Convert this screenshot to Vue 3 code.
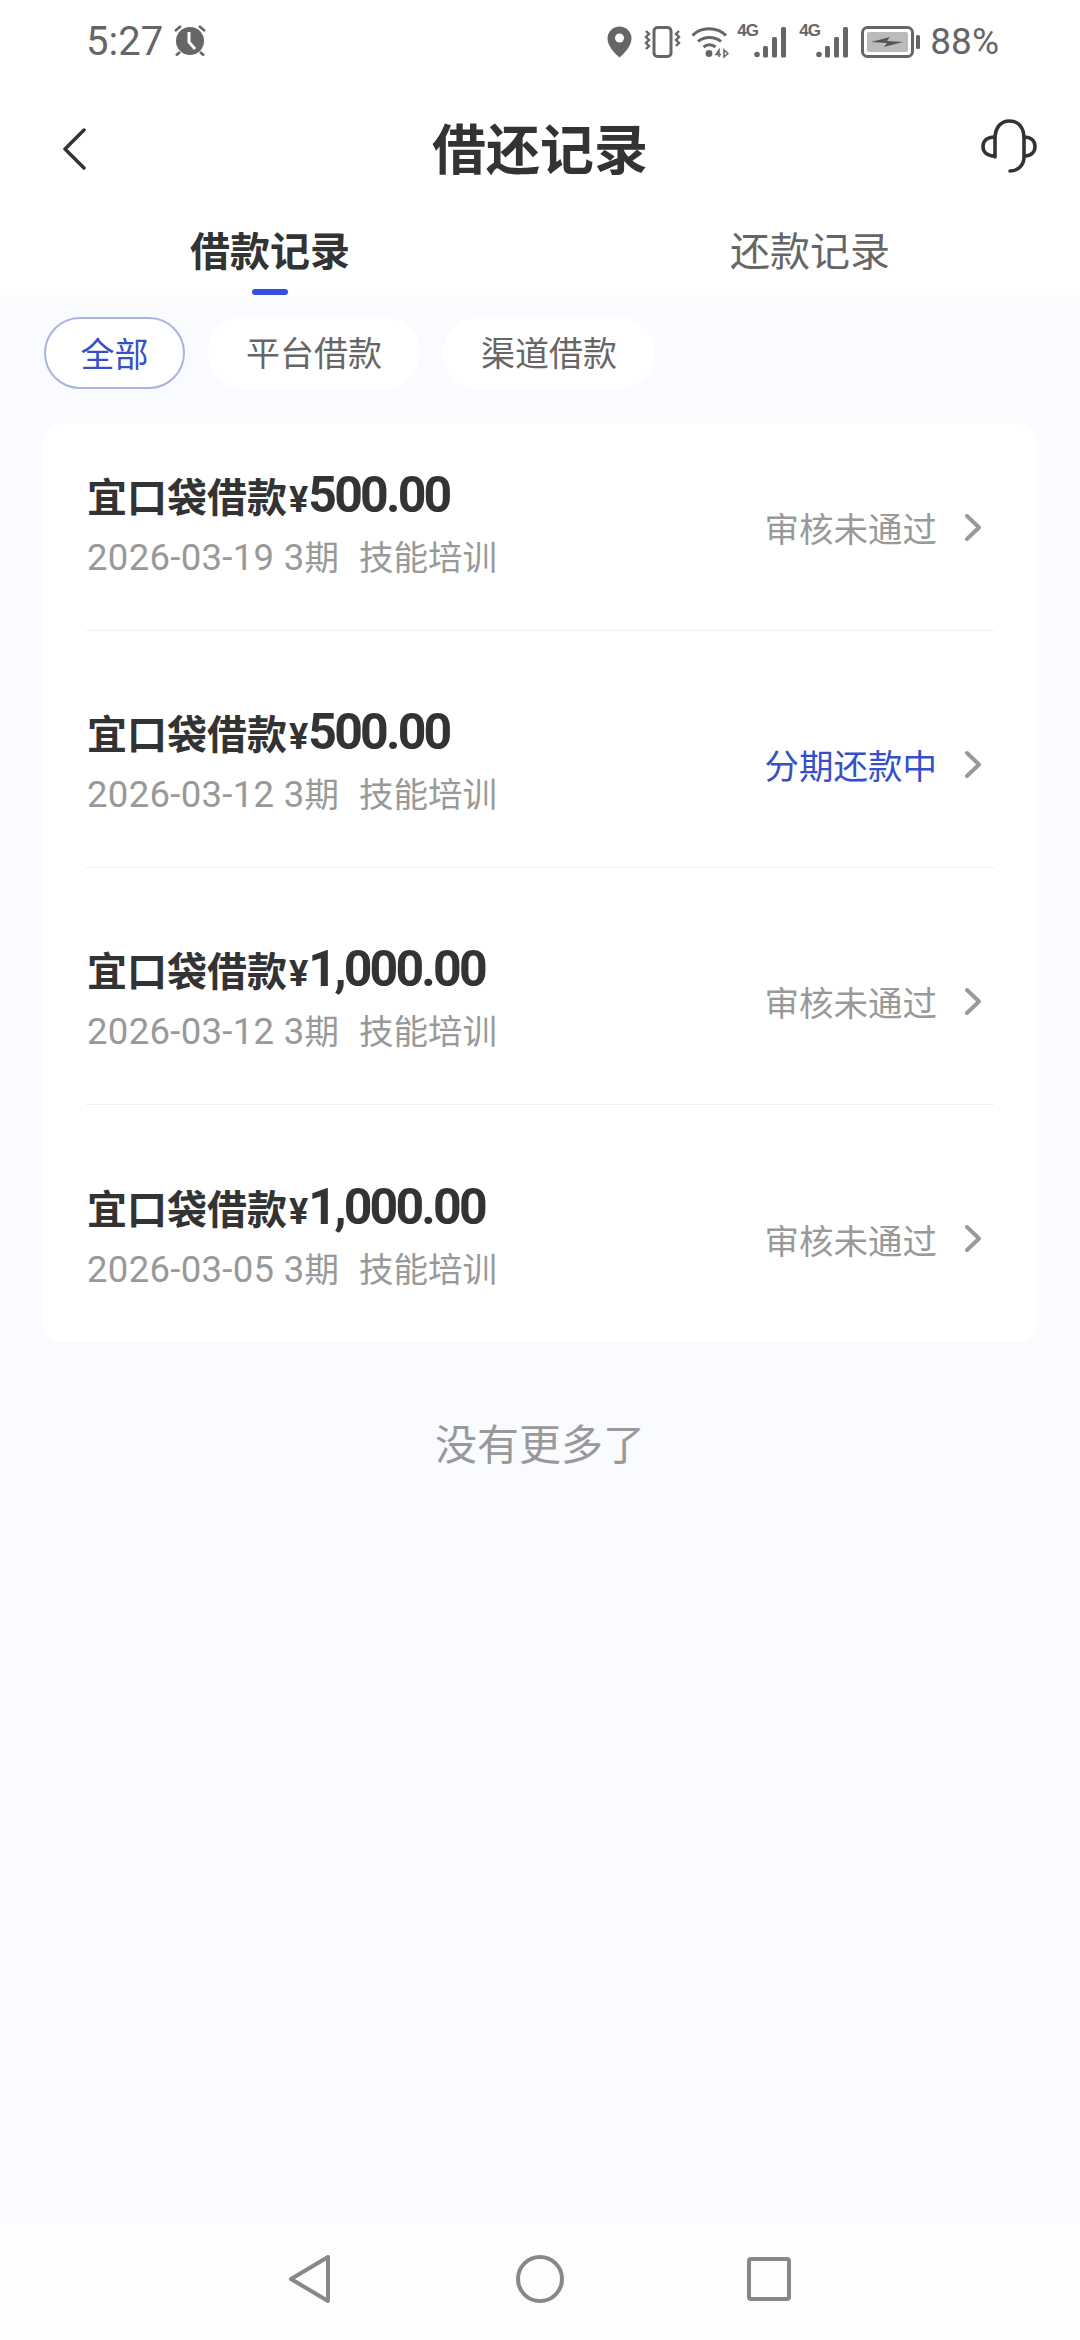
<template>
  <div class="page">
    <div class="top">
      <div class="status-bar">
        <div class="status-left">
          <span class="time">5:27</span>
          <svg class="alarm" width="34" height="32" viewBox="0 0 34 32">
            <circle cx="17" cy="17" r="14" fill="#666" />
            <path d="M16 8v10l6 7" fill="none" stroke="#fff" stroke-width="3" />
            <path d="M2 7l6-5M32 7l-6-5M7 28l-4 3.500M27 28l4 3.500" stroke="#666" stroke-width="2.600" />
          </svg>
        </div>
        <div class="status-right">
          <svg width="25" height="32" viewBox="0 0 25 32">
            <path d="M12.500 0.500C5.800.5.5 5.800.5 12.500c0 8 8 15.500 12 19 4-3.500 12-11 12-19C24.500 5.800 19.200.5 12.500.5z" fill="#666" />
            <circle cx="12.500" cy="12" r="4.500" fill="#fff" />
          </svg>
          <svg class="ml12" width="38" height="32" viewBox="0 0 38 32">
            <rect x="10" y="1.500" width="17" height="29" rx="3.500" fill="none" stroke="#666" stroke-width="3" />
            <path d="M2 5l3 3-3 3 3 3-3 3 3 3-3 3M35 5l-3 3 3 3-3 3 3 3-3 3" fill="none" stroke="#666" stroke-width="2.400" />
          </svg>
          <svg class="ml9" width="38" height="32" viewBox="0 0 38 32">
            <path d="M1.500 9.500C10 .5 26 .5 35 9.500M7 15.500c6-5.500 17-5.500 23 0M12.500 21c3.500-3 8.500-3 12 0" fill="none" stroke="#666" stroke-width="3" />
            <circle cx="18" cy="27.500" r="3.400" fill="#666" />
            <path d="M28 31v-7l-3 4.500h5M33 24v7l4-3.500z" fill="none" stroke="#666" stroke-width="1.500" />
          </svg>
          <div class="net ml8">
            <span class="net-label">4G</span>
            <svg width="33" height="32" viewBox="0 0 33 32">
              <circle cx="3" cy="28.500" r="2.800" fill="#666" /><rect x="9" y="20" width="5" height="11.500" rx="1.500" fill="#666" /><rect x="18" y="11" width="5" height="20.500" rx="1.500" fill="#666" /><rect x="27" y="1" width="5" height="30.500" rx="1.500" fill="#666" />
            </svg>
          </div>
          <div class="net ml12">
            <span class="net-label">4G</span>
            <svg width="33" height="32" viewBox="0 0 33 32">
              <circle cx="3" cy="28.500" r="2.800" fill="#666" /><rect x="9" y="20" width="5" height="11.500" rx="1.500" fill="#666" /><rect x="18" y="11" width="5" height="20.500" rx="1.500" fill="#666" /><rect x="27" y="1" width="5" height="30.500" rx="1.500" fill="#666" />
            </svg>
          </div>
          <svg class="ml12" width="60" height="32" viewBox="0 0 60 32">
            <rect x="1.500" y="1.500" width="50" height="29" rx="5" fill="none" stroke="#666" stroke-width="3" />
            <rect x="6" y="6" width="41" height="20" rx="2" fill="#bbb" />
            <path d="M10 16l19-5-3 4 16 1-19 5 3-4z" fill="#555" />
            <rect x="55" y="9" width="4" height="14" rx="1.500" fill="#666" />
          </svg>
          <span class="battery">88%</span>
        </div>
      </div>

      <div class="nav">
        <svg class="back" width="24" height="42" viewBox="0 0 24 42">
          <path d="M22 2L3 21l19 19" fill="none" stroke="#333" stroke-width="3.500" stroke-linecap="round" stroke-linejoin="round" />
        </svg>
        <h1 class="title">借还记录</h1>
        <svg class="support" width="56" height="56" viewBox="0 0 56 56">
          <path d="M14 38V20C14 8 20 2 28.500 2S43 8 43 20v18c0 8-6 14-14 14" fill="none" stroke="#333" stroke-width="3.600" stroke-linecap="round" />
          <path d="M14 18C6 18 2 22 2 27.500S6 37 14 37M43 18c7 0 11 4 11 9.500S50 37 43 37" fill="none" stroke="#333" stroke-width="3.600" />
        </svg>
      </div>

      <div class="tabs">
        <div class="tab active">借款记录<i class="tab-line"></i></div>
        <div class="tab">还款记录</div>
      </div>
    </div>

    <div class="chips">
      <span v-for="chip in chips" :key="chip" class="chip" :class="{ selected: chip === '全部' }">{{ chip }}</span>
    </div>

    <div class="card">
      <div v-for="(rec, i) in records" :key="i" class="row">
        <div class="row-main">
          <div class="row-title">宜口袋借款<span class="yen">¥</span><span class="amount">{{ rec.amount }}</span></div>
          <div class="row-sub"><span class="num">{{ rec.date }} 3</span>期<span class="purpose">技能培训</span></div>
        </div>
        <span class="state" :class="{ blue: rec.repaying }">{{ rec.state }}</span>
        <svg class="arrow" width="19" height="29" viewBox="0 0 19 29">
          <path d="M3 3l12 11.500L3 26" fill="none" stroke="#999" stroke-width="4" stroke-linecap="round" stroke-linejoin="round" />
        </svg>
      </div>
    </div>

    <div class="no-more">没有更多了</div>

    <div class="bottom-nav">
      <svg width="44" height="50" viewBox="0 0 44 50">
        <path d="M40 3L3 25l37 22z" fill="none" stroke="#888" stroke-width="4" stroke-linejoin="round" />
      </svg>
      <svg width="48" height="48" viewBox="0 0 48 48">
        <circle cx="24" cy="24" r="22" fill="none" stroke="#888" stroke-width="4" />
      </svg>
      <svg width="44" height="44" viewBox="0 0 44 44">
        <rect x="2" y="2" width="40" height="40" rx="2" fill="none" stroke="#888" stroke-width="4" />
      </svg>
    </div>
  </div>
</template>

<script setup>
const chips = ['全部', '平台借款', '渠道借款']

const records = [
  { amount: '500.00', date: '2026-03-19', state: '审核未通过' },
  { amount: '500.00', date: '2026-03-12', state: '分期还款中', repaying: true },
  { amount: '1,000.00', date: '2026-03-12', state: '审核未通过' },
  { amount: '1,000.00', date: '2026-03-05', state: '审核未通过' },
]
</script>

<style>
html,
body {
  margin: 0;
  background: #fafbff;
}
</style>

<style scoped>
.page {
  width: 1080px;
  height: 2340px;
  display: flex;
  flex-direction: column;
  overflow: hidden;
  background: #fafbff;
  font-family: "Noto Sans CJK SC", "Noto Sans", sans-serif;
  color: #333;
}

.top {
  background: #fff;
  height: 295px;
}

.status-bar {
  height: 84px;
  padding: 0 81px 0 86px;
  box-sizing: border-box;
  display: flex;
  justify-content: space-between;
  align-items: center;
}

.status-left,
.status-right {
  display: flex;
  align-items: center;
}

.time,
.battery {
  font-family: Roboto, sans-serif;
  color: #666;
  font-size: 40px;
  line-height: 40px;
}

.battery {
  font-size: 37px;
  margin-left: 9px;
}

.alarm {
  margin-left: 10px;
  margin-top: -4px;
}

.ml8 { margin-left: 8px; }
.ml9 { margin-left: 9px; }
.ml12 { margin-left: 12px; }

.net {
  display: flex;
  position: relative;
  padding-left: 17px;
}

.net-label {
  position: absolute;
  left: 0;
  top: -5px;
  font-family: "Liberation Sans", sans-serif;
  font-size: 17px;
  font-weight: 700;
  letter-spacing: -1px;
  color: #666;
}

.nav {
  height: 130px;
  padding: 0 43px 0 62px;
  display: flex;
  align-items: center;
  justify-content: space-between;
  position: relative;
}

.support {
  margin-bottom: 5px;
}

.title {
  position: absolute;
  left: 0;
  right: 0;
  margin: 0 0 4px;
  text-align: center;
  font-size: 54px;
  font-weight: 700;
  line-height: 66px;
}

.tabs {
  display: flex;
}

.tab {
  flex: 1;
  text-align: center;
  font-size: 40px;
  line-height: 70px;
  color: #666;
  position: relative;
  height: 81px;
}

.tab.active {
  font-weight: 700;
  color: #333;
}

.tab-line {
  position: absolute;
  left: 252px;
  bottom: 0;
  width: 36px;
  height: 6px;
  border-radius: 3px;
  background: #3550dc;
}

.chips {
  display: flex;
  gap: 23px;
  padding: 22px 44px 0;
}

.chip {
  height: 72px;
  line-height: 70px;
  box-sizing: border-box;
  padding: 0 38px;
  border-radius: 36px;
  background: #fff;
  font-size: 34px;
  color: #666;
}

.chip.selected {
  border: 2px solid #a9b4e0;
  line-height: 67px;
  color: #3550c8;
  padding: 0 34.500px;
}

.card {
  margin: 35px 44px 0;
  background: #fff;
  border-radius: 16px;
  padding: 0 42px;
}

.row {
  height: 206px;
  display: flex;
  align-items: center;
  border-bottom: 1px solid #eeeff2;
}

.row + .row {
  height: 237px;
  padding-top: 30px;
  box-sizing: border-box;
}

.row:last-child {
  border-bottom: none;
}

.row-main {
  flex: 1;
  padding-left: 1px;
  padding-bottom: 6px;
}

.row-title {
  display: flex;
  align-items: baseline;
  font-size: 40px;
  font-weight: 700;
  line-height: 60px;
}

.yen {
  font-family: Roboto, sans-serif;
  font-size: 36px;
  margin-left: 2px;
}

.amount {
  font-family: Roboto, sans-serif;
  font-size: 50px;
  font-weight: 700;
  letter-spacing: -2.800px;
}

.row-sub {
  font-size: 34.500px;
  line-height: 50px;
  color: #999;
}

.num {
  font-family: Roboto, sans-serif;
  font-size: 36.500px;
  letter-spacing: 0.300px;
}

.purpose {
  margin-left: 20px;
}

.state {
  font-size: 34.500px;
  color: #999;
}

.state.blue {
  color: #3550c8;
}

.arrow {
  margin-left: 27px;
  margin-right: 11px;
}

.no-more {
  margin-top: 70px;
  text-align: center;
  font-size: 42px;
  line-height: 60px;
  color: #999;
}

.bottom-nav {
  margin-top: auto;
  height: 122px;
  padding: 0 289px 0 288px;
  box-sizing: border-box;
  display: flex;
  align-items: center;
  justify-content: space-between;
  background: #fdfdfd;
}
</style>
